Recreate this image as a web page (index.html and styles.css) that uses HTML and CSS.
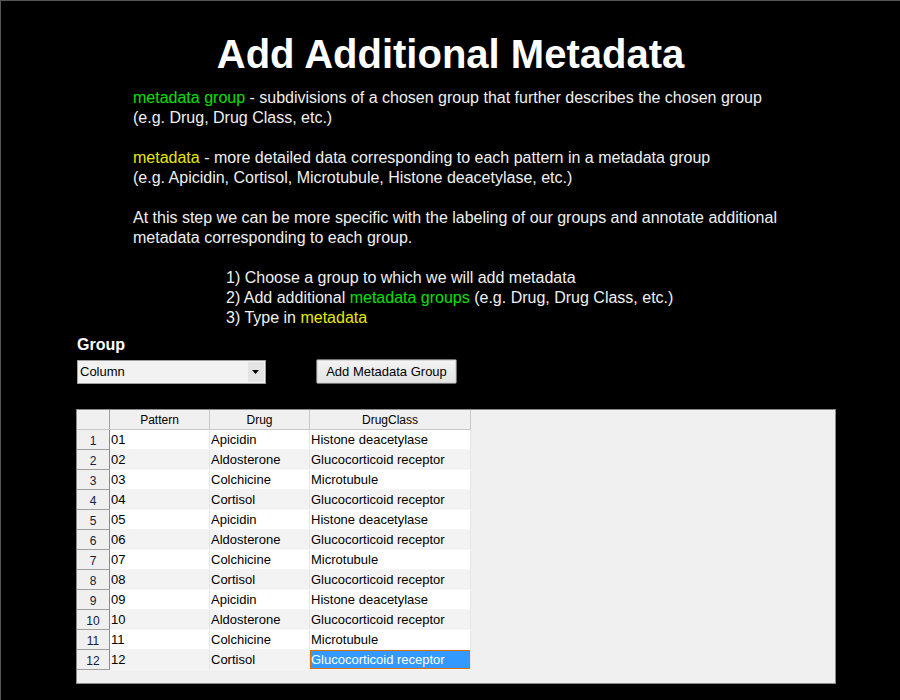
FILE: index.html
```html
<!DOCTYPE html>
<html>
<head>
<meta charset="utf-8">
<link rel="stylesheet" href="styles.css">
</head>
<body>
<div class="page">
  <h1 class="title">Add Additional Metadata</h1>
  <div class="intro">
    <p><span class="green">metadata group</span> - subdivisions of a chosen group that further describes the chosen group<br>(e.g. Drug, Drug Class, etc.)</p>
    <p><span class="yellow">metadata</span> - more detailed data corresponding to each pattern in a metadata group<br>(e.g. Apicidin, Cortisol, Microtubule, Histone deacetylase, etc.)</p>
    <p>At this step we can be more specific with the labeling of our groups and annotate additional<br>metadata corresponding to each group.</p>
  </div>
  <ol class="steps">
    <li>1) Choose a group to which we will add metadata</li>
    <li>2) Add additional <span class="green">metadata groups</span> (e.g. Drug, Drug Class, etc.)</li>
    <li>3) Type in <span class="yellow">metadata</span></li>
  </ol>
  <div class="group-label">Group</div>
  <div class="controls">
    <div class="select"><span class="select-text">Column</span><span class="select-arrow"><svg width="8" height="4" viewBox="0 0 8 4"><path d="M0 0H7L3.5 4Z" fill="#000"/></svg></span></div>
    <button class="btn">Add Metadata Group</button>
  </div>
  <div class="grid-box">
    <table class="grid">
      <thead>
        <tr><th class="corner"></th><th class="c1">Pattern</th><th class="c2">Drug</th><th class="c3">DrugClass</th></tr>
      </thead>
      <tbody>
        <tr><td class="rn">1</td><td>01</td><td>Apicidin</td><td>Histone deacetylase</td></tr>
        <tr><td class="rn">2</td><td>02</td><td>Aldosterone</td><td>Glucocorticoid receptor</td></tr>
        <tr><td class="rn">3</td><td>03</td><td>Colchicine</td><td>Microtubule</td></tr>
        <tr><td class="rn">4</td><td>04</td><td>Cortisol</td><td>Glucocorticoid receptor</td></tr>
        <tr><td class="rn">5</td><td>05</td><td>Apicidin</td><td>Histone deacetylase</td></tr>
        <tr><td class="rn">6</td><td>06</td><td>Aldosterone</td><td>Glucocorticoid receptor</td></tr>
        <tr><td class="rn">7</td><td>07</td><td>Colchicine</td><td>Microtubule</td></tr>
        <tr><td class="rn">8</td><td>08</td><td>Cortisol</td><td>Glucocorticoid receptor</td></tr>
        <tr><td class="rn">9</td><td>09</td><td>Apicidin</td><td>Histone deacetylase</td></tr>
        <tr><td class="rn">10</td><td>10</td><td>Aldosterone</td><td>Glucocorticoid receptor</td></tr>
        <tr><td class="rn">11</td><td>11</td><td>Colchicine</td><td>Microtubule</td></tr>
        <tr><td class="rn">12</td><td>12</td><td>Cortisol</td><td class="sel">Glucocorticoid receptor</td></tr>
      </tbody>
    </table>
  </div>
</div>
</body>
</html>
```

FILE: styles.css
```css
html, body {
  margin: 0;
  padding: 0;
  background: #000;
}
.page {
  width: 899px;
  height: 699px;
  border-top: 1px solid #555;
  border-left: 1px solid #555;
  background: #000;
  color: #f0f0f0;
  font-family: "Liberation Sans", Arial, sans-serif;
  overflow: hidden;
}
.title {
  margin: 29px 0 0 0;
  text-align: center;
  font-size: 40px;
  line-height: 48px;
  font-weight: bold;
  color: #fff;
}
.intro {
  margin: 10px 0 0 132px;
  font-size: 16px;
  line-height: 20px;
}
.intro p {
  margin: 0 0 20px 0;
}
.green { color: #00e000; }
.yellow { color: #e8e800; }
.steps {
  list-style: none;
  margin: 0 0 0 225px;
  padding: 0;
  font-size: 16px;
  line-height: 20px;
}
.group-label {
  margin: 7px 0 0 76px;
  font-size: 16px;
  font-weight: bold;
  line-height: 20px;
  color: #fff;
}
.controls {
  display: flex;
  align-items: center;
  margin: 4px 0 0 76px;
  gap: 50px;
}
.select {
  width: 187px;
  height: 22px;
  border: 1px solid #a0a0a0;
  background: #f2f2f2;
  display: flex;
  align-items: center;
  box-sizing: content-box;
  color: #000;
}
.select-text {
  flex: 1;
  padding-left: 2px;
  font-family: "Liberation Sans", sans-serif;
  font-size: 13px;
}
.select-arrow {
  width: 16px;
  height: 20px;
  margin-right: 1px;
  background: #e4e4e4;
  display: flex;
  align-items: center;
  justify-content: center;
}
.btn {
  width: 141px;
  height: 25px;
  margin: 0;
  padding: 0;
  border: 1px solid #707070;
  outline: 1px solid #d8d8d8;
  outline-offset: -2px;
  border-radius: 2px;
  background: linear-gradient(#f4f4f4, #e2e2e2);
  font-family: "Liberation Sans", sans-serif;
  font-size: 13px;
  color: #000;
}
.grid-box {
  margin: 25px 0 0 75px;
  width: 758px;
  height: 273px;
  border: 1px solid #8a8a8a;
  background: #f0f0f0;
  box-sizing: content-box;
}
.grid {
  border-collapse: collapse;
  font-family: "Liberation Sans", Arial, sans-serif;
  font-size: 13px;
  color: #000;
  table-layout: fixed;
}
.grid th {
  height: 19px;
  padding: 0;
  font-size: 12px;
  font-weight: normal;
  background: #f0f0f0;
  border-right: 1px solid #c8c8c8;
  border-bottom: 1px solid #c8c8c8;
  text-align: center;
}
.grid th.corner { width: 32px; border-right: 1px solid #a0a0a0; }
.grid th.c1 { width: 99px; }
.grid th.c2 { width: 99px; }
.grid th.c3 { width: 160px; }
.grid td {
  height: 19px;
  padding: 0 0 0 1px;
  border-right: 1px solid #e6e6e6;
  border-bottom: 1px solid #f6f6f6;
  white-space: nowrap;
  overflow: hidden;
  line-height: 19px;
}
.grid tbody tr:nth-child(odd) td { background: #fff; }
.grid tbody tr:nth-child(even) td { background: #f3f3f3; }
.grid td.rn {
  background: #f0f0f0 !important;
  text-align: center;
  font-size: 12px;
  border-right: 1px solid #8a8a8a;
  border-bottom: 1px solid #a0a0a0;
  padding: 3px 0 0 0;
  height: 16px;
  line-height: 16px;
  color: #102040;
}
.grid td.sel {
  background: #3399ff !important;
  color: #fff;
  box-shadow: inset 0 0 0 1px #d87010;
}
```
